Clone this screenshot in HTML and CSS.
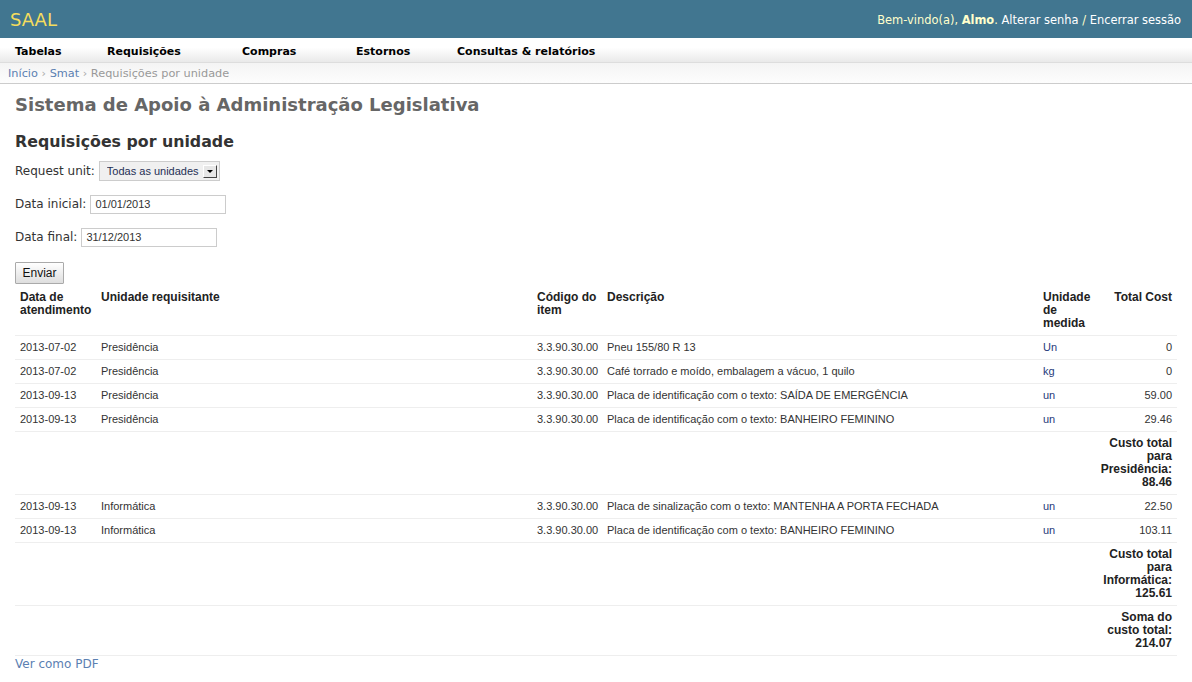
FILE: index.html
```html
<!DOCTYPE html>
<html lang="pt">
<head>
<meta charset="utf-8">
<title>Requisições por unidade</title>
<link rel="stylesheet" href="styles.css">
</head>
<body>
<header class="topbar">
  <div class="brand">SAAL</div>
  <div class="user-tools">Bem-vindo(a), <strong>Almo</strong>. <a href="#">Alterar senha</a> / <a href="#">Encerrar sessão</a></div>
</header>
<nav class="menu">
  <a href="#" class="menu-item m1">Tabelas</a>
  <a href="#" class="menu-item m2">Requisições</a>
  <a href="#" class="menu-item m3">Compras</a>
  <a href="#" class="menu-item m4">Estornos</a>
  <a href="#" class="menu-item m5">Consultas &amp; relatórios</a>
</nav>
<div class="breadcrumbs"><a href="#">Início</a> <span class="sep">›</span> <a href="#">Smat</a> <span class="sep">›</span> Requisições por unidade</div>
<main class="content">
  <h1 class="site-title">Sistema de Apoio à Administração Legislativa</h1>
  <h2 class="page-title">Requisições por unidade</h2>
  <form class="filters">
    <div class="field">
      <label>Request unit:</label>
      <div class="select-wrap">
        <select class="select"><option>Todas as unidades</option></select>
        <span class="select-arrow"><span class="tri"></span></span>
      </div>
    </div>
    <div class="field">
      <label>Data inicial:</label>
      <input class="text-input" type="text" value="01/01/2013">
    </div>
    <div class="field">
      <label>Data final:</label>
      <input class="text-input" type="text" value="31/12/2013">
    </div>
    <div class="field submit-row">
      <button type="button" class="btn">Enviar</button>
    </div>
  </form>
  <table class="report">
    <colgroup>
      <col class="c-date"><col class="c-unit"><col class="c-code"><col class="c-desc"><col class="c-meas"><col class="c-cost">
    </colgroup>
    <thead>
      <tr><th>Data de atendimento</th><th>Unidade requisitante</th><th>Código do item</th><th>Descrição</th><th>Unidade de medida</th><th class="num">Total Cost</th></tr>
    </thead>
    <tbody>
      <tr><td>2013-07-02</td><td>Presidência</td><td>3.3.90.30.00</td><td>Pneu 155/80 R 13</td><td class="meas">Un</td><td class="num">0</td></tr>
      <tr><td>2013-07-02</td><td>Presidência</td><td>3.3.90.30.00</td><td>Café torrado e moído, embalagem a vácuo, 1 quilo</td><td class="meas">kg</td><td class="num">0</td></tr>
      <tr><td>2013-09-13</td><td>Presidência</td><td>3.3.90.30.00</td><td>Placa de identificação com o texto: SAÍDA DE EMERGÊNCIA</td><td class="meas">un</td><td class="num">59.00</td></tr>
      <tr><td>2013-09-13</td><td>Presidência</td><td>3.3.90.30.00</td><td>Placa de identificação com o texto: BANHEIRO FEMININO</td><td class="meas">un</td><td class="num">29.46</td></tr>
      <tr class="subtotal"><td></td><td></td><td></td><td></td><td></td><td class="num">Custo total para Presidência: 88.46</td></tr>
      <tr><td>2013-09-13</td><td>Informática</td><td>3.3.90.30.00</td><td>Placa de sinalização com o texto: MANTENHA A PORTA FECHADA</td><td class="meas">un</td><td class="num">22.50</td></tr>
      <tr><td>2013-09-13</td><td>Informática</td><td>3.3.90.30.00</td><td>Placa de identificação com o texto: BANHEIRO FEMININO</td><td class="meas">un</td><td class="num">103.11</td></tr>
      <tr class="subtotal"><td></td><td></td><td></td><td></td><td></td><td class="num">Custo total para Informática: 125.61</td></tr>
      <tr class="subtotal"><td></td><td></td><td></td><td></td><td></td><td class="num">Soma do custo total: 214.07</td></tr>
    </tbody>
  </table>
  <a href="#" class="pdf-link">Ver como PDF</a>
</main>
</body>
</html>
```

FILE: styles.css
```css
* { box-sizing: border-box; }
html, body { margin: 0; padding: 0; background: #fff; }
body {
  font-family: "DejaVu Sans", Verdana, sans-serif;
  font-size: 12px;
  color: #333;
}
a { text-decoration: none; color: #5b80b2; }

.topbar {
  height: 38px;
  background: #417690;
  display: flex;
  align-items: center;
  justify-content: space-between;
  padding: 0 11px 0 10px;
}
.brand {
  color: #f5dd5d;
  font-size: 18px;
  font-weight: normal;
}
.user-tools {
  color: #ffc;
  font-size: 11.45px;
  padding-top: 1px;
}
.user-tools strong { font-weight: bold; }
.user-tools a { color: #fff; }

.menu {
  height: 25px;
  display: flex;
  align-items: center;
  padding-left: 15px;
  padding-top: 2px;
  background: linear-gradient(#ffffff, #ffffff 40%, #e9e9e9);
  border-bottom: 1px solid #ddd;
}
.menu-item {
  color: #000;
  font-weight: bold;
  font-size: 11px;
}
.m1 { width: 92px; }
.m2 { width: 135px; }
.m3 { width: 114px; }
.m4 { width: 101px; }

.breadcrumbs {
  height: 21px;
  padding: 4px 8px 0;
  font-size: 11.3px;
  color: #999;
  background: linear-gradient(#f4f4f4, #fdfdfd);
  border-bottom: 1px solid #ccc;
}
.breadcrumbs a { color: #5b80b2; }
.breadcrumbs .sep { color: #aaa; }

.content { padding: 9px 15px 0; }
.site-title {
  margin: 0;
  font-size: 18px;
  font-weight: bold;
  color: #666;
  line-height: 24px;
}
.page-title {
  margin: 14px 0 0;
  font-size: 15.8px;
  font-weight: bold;
  color: #333;
  line-height: 22px;
}
.filters { margin-top: 8px; }
.field {
  display: flex;
  align-items: center;
  gap: 4px;
  font-size: 12px;
  height: 20px;
  margin-bottom: 13px;
}
.field label { color: #333; font-size: 12px; }
.select-wrap { position: relative; }
.select {
  appearance: none;
  -webkit-appearance: none;
  width: 121px;
  height: 20px;
  border: 1px solid #ccc;
  background: #f0f0f0;
  font-family: "Liberation Sans", Arial, sans-serif;
  font-size: 11px;
  color: #1f2f55;
  padding: 0 0 0 7px;
  margin: 0;
}
.select-arrow {
  position: absolute;
  right: 3px;
  top: 4px;
  width: 14px;
  height: 13px;
  background: #e6e6e6;
  border-top: 1px solid #fff;
  border-left: 1px solid #fff;
  border-right: 1px solid #444;
  border-bottom: 1px solid #444;
  display: flex;
  align-items: center;
  justify-content: center;
}
.tri {
  width: 0; height: 0;
  border-left: 3px solid transparent;
  border-right: 3px solid transparent;
  border-top: 3px solid #000;
}
.text-input {
  width: 136px;
  height: 19px;
  border: 1px solid #ccc;
  font-family: "Liberation Sans", Arial, sans-serif;
  font-size: 11px;
  color: #333;
  padding: 0 4px;
  margin: 0;
}
.submit-row { height: 22px; margin-bottom: 2px; margin-top: 15px; }
.btn {
  width: 49px;
  height: 22px;
  border: 1px solid #aaa;
  border-radius: 1px;
  background: linear-gradient(#ffffff, #dedede);
  font-family: "Liberation Sans", Arial, sans-serif;
  font-size: 12px;
  color: #111;
  padding: 0;
}

.report {
  width: 1162px;
  table-layout: fixed;
  border-collapse: collapse;
  font-family: "Liberation Sans", Arial, sans-serif;
  font-size: 11px;
  color: #333;
}
.c-date { width: 81px; }
.c-unit { width: 436px; }
.c-code { width: 70px; }
.c-desc { width: 436px; }
.c-meas { width: 57px; }
.c-cost { width: 82px; }
.report th {
  text-align: left;
  vertical-align: top;
  font-size: 12px;
  font-weight: bold;
  line-height: 13px;
  padding: 5px;
  color: #222;
  border-bottom: 1px solid #eee;
}
.report td {
  vertical-align: top;
  line-height: 13px;
  padding: 5px;
  border-bottom: 1px solid #eee;
}
.report .num { text-align: right; }
.report .meas { color: #1f3a7a; }
.report .subtotal td {
  font-size: 12px;
  font-weight: bold;
  color: #222;
}
.pdf-link {
  display: block;
  margin-top: 1px;
  font-size: 12px;
  color: #5b80b2;
}
```
